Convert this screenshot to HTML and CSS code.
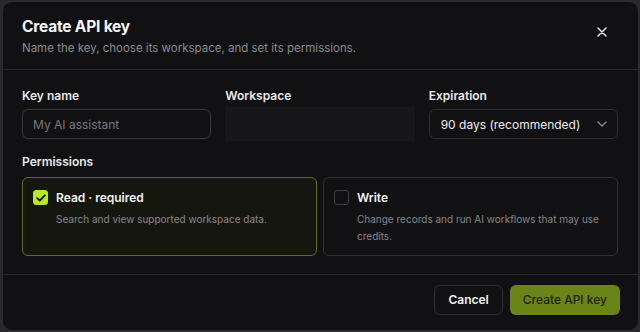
FILE: index.html
```html
<!DOCTYPE html>
<html lang="en">

<head>
    <meta charset="UTF-8">
    <meta name="viewport" content="width=device-width, initial-scale=1.0">
    <title>Create API key</title>
    <link rel="stylesheet" href="styles.css">
</head>

<body>
    <div class="dialog">
        <div class="dialog-header">
            <div>
                <h2>Create API key</h2>
                <p class="subtitle">Name the key, choose its workspace, and set its permissions.</p>
            </div>
            <button class="close-btn" aria-label="Close">
                <svg width="10" height="10" viewBox="0 0 10 10"><path d="M1 1L9 9M9 1L1 9" stroke="#e6e6e6" stroke-width="1.5" stroke-linecap="round"/></svg>
            </button>
        </div>

        <div class="dialog-body">
            <div class="fields">
                <div class="field">
                    <label for="keyName">Key name</label>
                    <input type="text" id="keyName" placeholder="My AI assistant">
                </div>
                <div class="field">
                    <label>Workspace</label>
                    <div class="workspace-box"></div>
                </div>
                <div class="field">
                    <label>Expiration</label>
                    <div class="select">
                        <span>90 days (recommended)</span>
                        <svg width="10" height="6" viewBox="0 0 10 6"><path d="M1 1L5 5L9 1" fill="none" stroke="#8a8a8e" stroke-width="1.3" stroke-linecap="round" stroke-linejoin="round"/></svg>
                    </div>
                </div>
            </div>

            <div class="perm-label">Permissions</div>
            <div class="perms">
                <div class="perm-card selected">
                    <div class="perm-title">
                        <span class="checkbox checked">
                            <svg width="10" height="8" viewBox="0 0 10 8"><path d="M1.2 4.2L3.8 6.6L8.8 1.4" fill="none" stroke="#111" stroke-width="1.8" stroke-linecap="round" stroke-linejoin="round"/></svg>
                        </span>
                        Read · required
                    </div>
                    <p>Search and view supported workspace data.</p>
                </div>
                <div class="perm-card">
                    <div class="perm-title">
                        <span class="checkbox"></span>
                        Write
                    </div>
                    <p>Change records and run AI workflows that may use credits.</p>
                </div>
            </div>
        </div>

        <div class="dialog-footer">
            <button class="btn cancel">Cancel</button>
            <button class="btn primary">Create API key</button>
        </div>
    </div>
</body>

</html>
```

FILE: styles.css
```css
body {
    font-family: Inter, "Noto Sans", Arial, sans-serif;
    background-color: #2a2a2d;
    color: #f2f2f2;
    margin: 0;
    padding: 1px 1px 1px 2px;
    height: 332px;
    box-sizing: border-box;
}

.dialog {
    background-color: #111113;
    border: 1px solid #2c2c30;
    border-radius: 10px;
    height: 330px;
    box-sizing: border-box;
    display: flex;
    flex-direction: column;
}

.dialog-header {
    display: flex;
    justify-content: space-between;
    align-items: flex-start;
    padding: 15px 20px 14px 19px;
    border-bottom: 1px solid #27272b;
    height: 68px;
    box-sizing: border-box;
}

.dialog-header h2 {
    margin: 0;
    font-size: 15.5px;
    font-weight: 700;
    color: #f5f5f5;
    letter-spacing: -0.2px;
}

.subtitle {
    margin: 5px 0 0;
    font-size: 11.5px;
    color: #8b8b90;
}

.close-btn {
    background: none;
    border: none;
    padding: 0;
    margin-top: 9px;
    margin-right: 10px;
    width: 12px;
    height: 12px;
    display: flex;
    align-items: center;
    justify-content: center;
}

.dialog-body {
    padding: 18px 20px 0 19px;
    border-bottom: 1px solid #27272b;
    height: 205px;
    box-sizing: border-box;
}

.fields {
    display: grid;
    grid-template-columns: 1fr 1fr 1fr;
    gap: 14px;
}

.field label {
    display: block;
    font-size: 12px;
    font-weight: 600;
    color: #e8e8e8;
    margin-bottom: 6px;
}

.field input {
    width: 100%;
    box-sizing: border-box;
    height: 30px;
    padding: 0 10px;
    background-color: #111113;
    border: 1px solid #38383e;
    border-radius: 6px;
    outline: none;
    font-family: inherit;
    font-size: 12px;
    color: #eee;
}

.field input::placeholder {
    color: #77777c;
}

.workspace-box {
    height: 34px;
    margin-top: -2px;
    background-color: #17171a;
    border-radius: 2px;
}

.select {
    height: 30px;
    box-sizing: border-box;
    border: 1px solid #2e2e33;
    border-radius: 6px;
    display: flex;
    align-items: center;
    justify-content: space-between;
    padding: 0 10px 0 11px;
    font-size: 12px;
    color: #ededed;
}

.perm-label {
    font-size: 12px;
    font-weight: 600;
    color: #e8e8e8;
    margin-top: 13px;
    margin-bottom: 8px;
}

.perms {
    display: grid;
    grid-template-columns: 1fr 1fr;
    gap: 6px;
}

.perm-card {
    border: 1px solid #2e2e33;
    border-radius: 6px;
    height: 79px;
    box-sizing: border-box;
    padding: 12px 10px 0 10px;
}

.perm-card.selected {
    border-color: #5d6b23;
    background-color: #15170f;
}

.perm-title {
    display: flex;
    align-items: center;
    gap: 8px;
    font-size: 12px;
    font-weight: 600;
    color: #f2f2f2;
}

.checkbox {
    width: 15px;
    height: 15px;
    border: 1px solid #3e3e44;
    border-radius: 3px;
    display: flex;
    align-items: center;
    justify-content: center;
    box-sizing: border-box;
}

.checkbox.checked {
    background-color: #b9e82b;
    border-color: #b9e82b;
}

.perm-card p {
    margin: 6px 0 0 23px;
    font-size: 10px;
    line-height: 17px;
    color: #87878c;
}

.dialog-footer {
    flex: 1;
    display: flex;
    justify-content: flex-end;
    align-items: center;
    gap: 7px;
    padding: 0 18px 6px;
}

.btn {
    height: 30px;
    border-radius: 6px;
    font-family: inherit;
    font-size: 12px;
    font-weight: 600;
    padding: 0 13px;
    white-space: nowrap;
}

.btn.cancel {
    background-color: #111113;
    border: 1px solid #2e2e33;
    color: #f2f2f2;
}

.btn.primary {
    background-color: #6b8418;
    border: none;
    color: #1d230a;
    font-weight: 500;
}
```
